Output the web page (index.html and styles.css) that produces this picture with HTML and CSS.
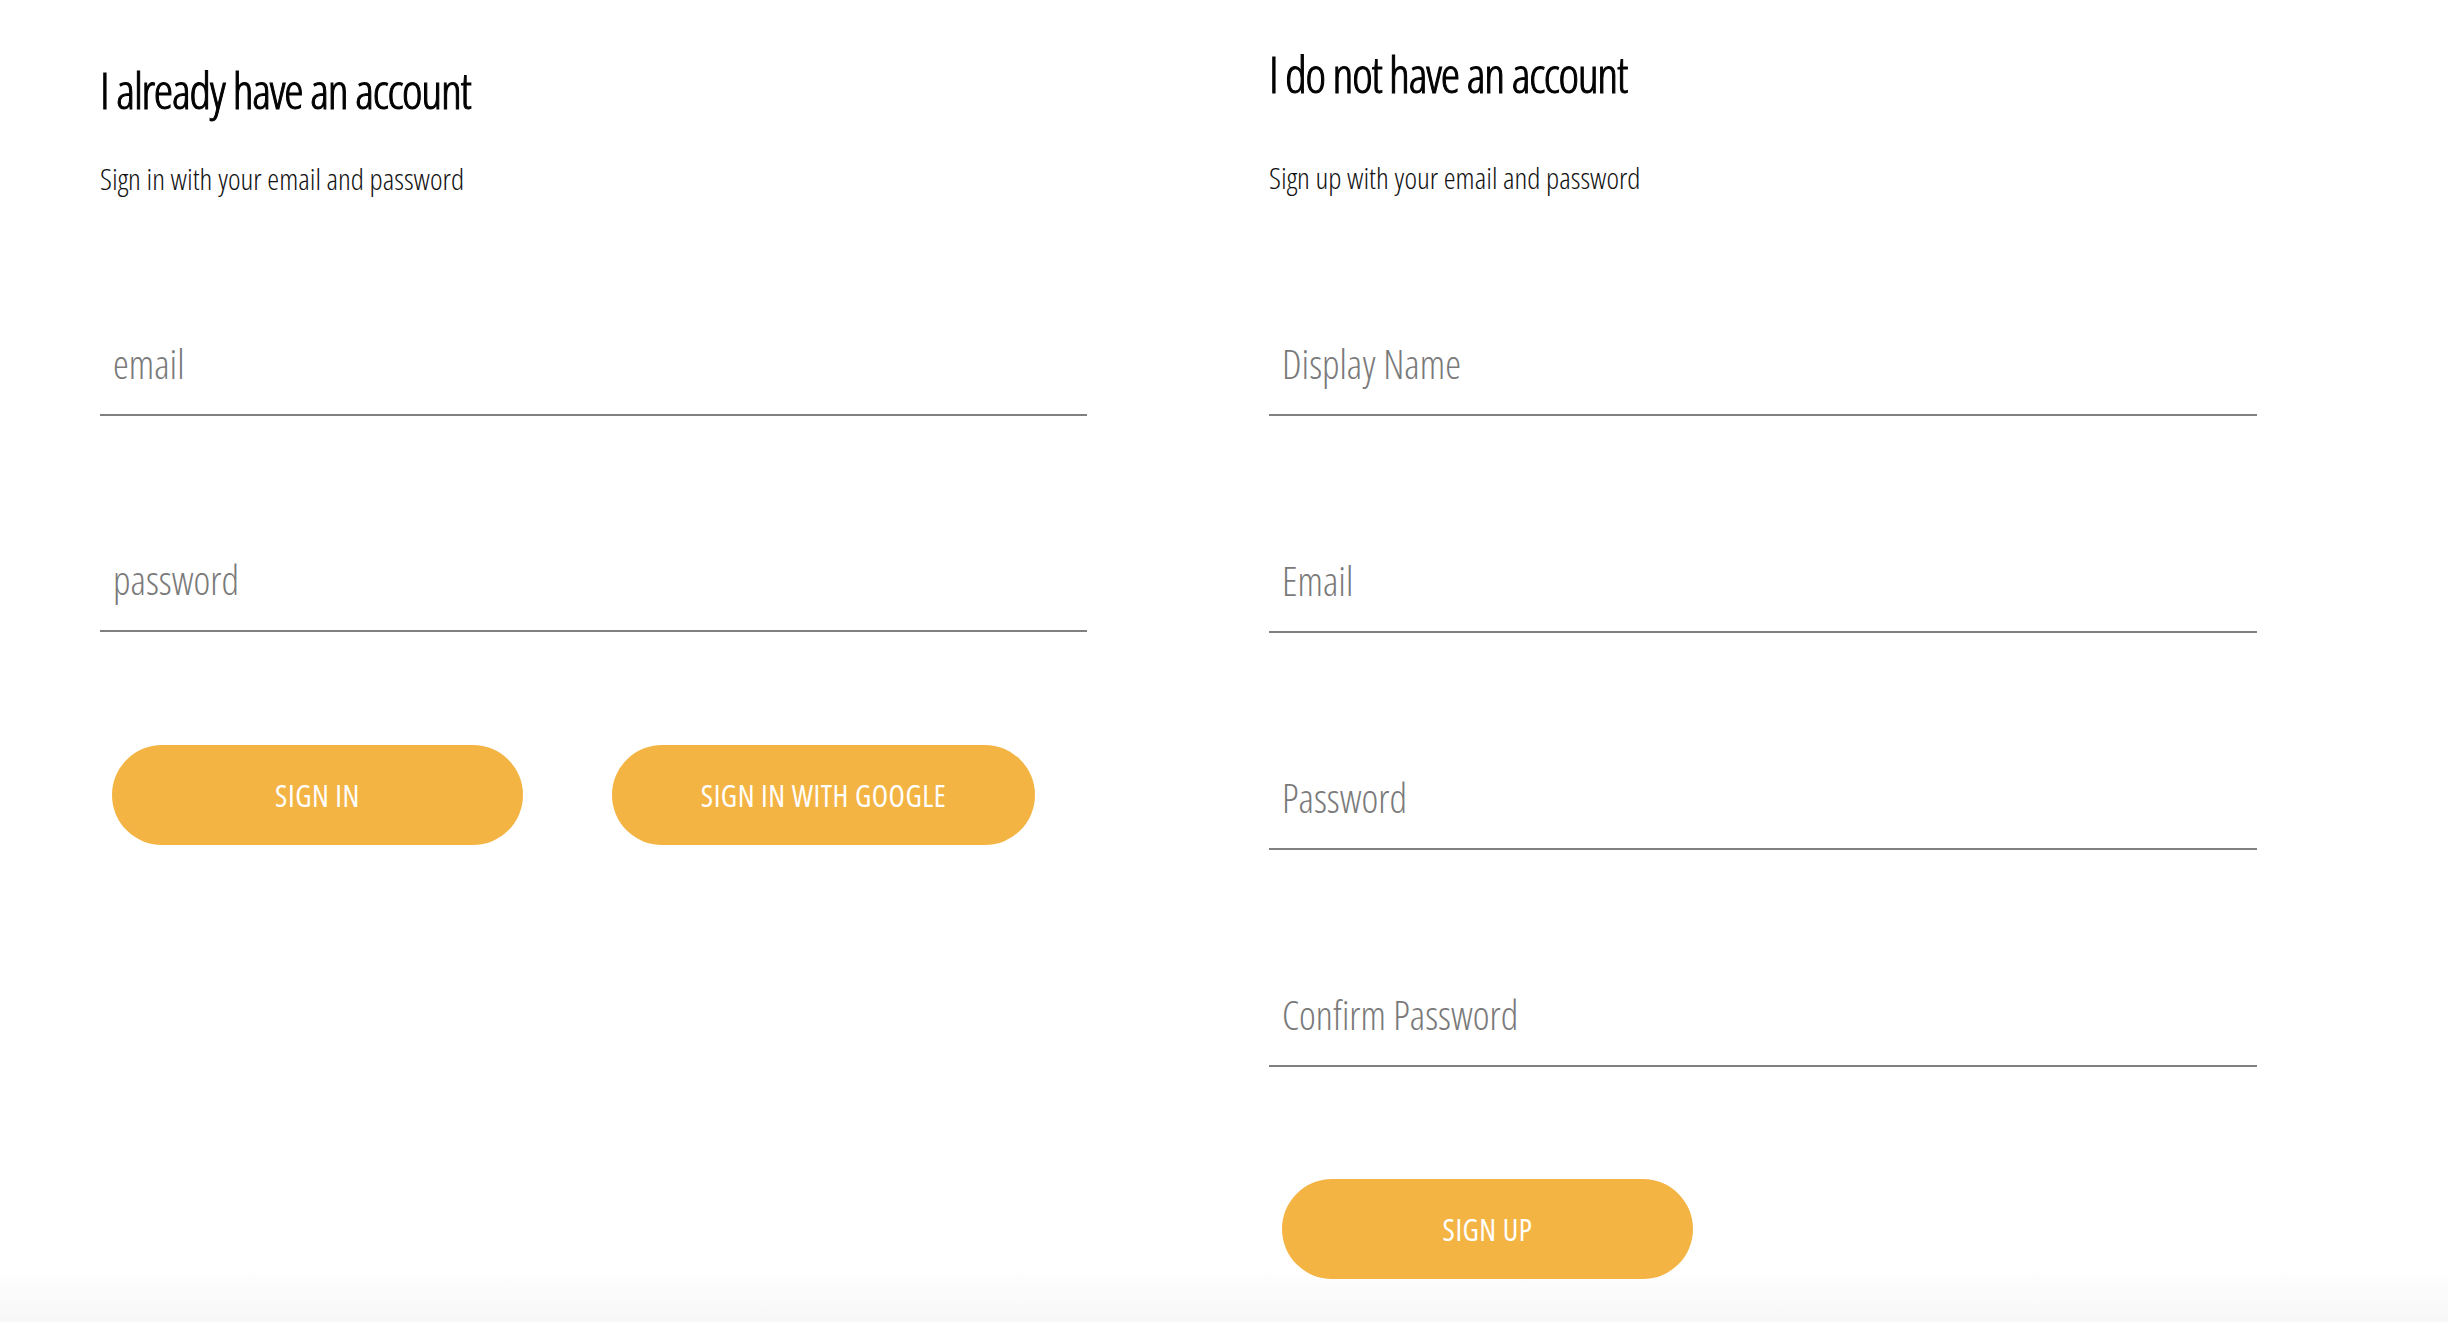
FILE: index.html
```html
<!DOCTYPE html>
<html lang="en">
<head>
<meta charset="utf-8">
<title>Sign in and sign up</title>
<link rel="stylesheet" href="styles.css">
</head>
<body>
<main class="auth">
  <section class="panel panel--signin">
    <h2 class="panel-title">I already have an account</h2>
    <span class="panel-sub">Sign in with your email and password</span>
    <form class="form">
      <div class="field"><input class="field-input" type="email"><label class="field-label">email</label></div>
      <div class="field"><input class="field-input" type="password"><label class="field-label">password</label></div>
      <div class="buttons">
        <button type="button" class="btn btn--signin">Sign in</button>
        <button type="button" class="btn btn--google">Sign in with Google</button>
      </div>
    </form>
  </section>
  <section class="panel panel--signup">
    <h2 class="panel-title">I do not have an account</h2>
    <span class="panel-sub">Sign up with your email and password</span>
    <form class="form">
      <div class="field"><input class="field-input" type="text"><label class="field-label">Display Name</label></div>
      <div class="field"><input class="field-input" type="email"><label class="field-label">Email</label></div>
      <div class="field"><input class="field-input" type="password"><label class="field-label">Password</label></div>
      <div class="field"><input class="field-input" type="password"><label class="field-label">Confirm Password</label></div>
      <div class="buttons">
        <button type="button" class="btn btn--signup">Sign up</button>
      </div>
    </form>
  </section>
</main>
</body>
</html>
```
FILE: styles.css
```css
html {
  min-height: 100%;
  background: linear-gradient(to bottom, #ffffff calc(100% - 56px), #f7f7f7 100%);
}
body {
  margin: 0;
  font-family: "Open Sans", "Liberation Sans", sans-serif;
  font-stretch: 75%;
  color: #000;
}
.auth {
  display: grid;
  grid-template-columns: 987px 988px;
  column-gap: 182px;
  padding-left: 100px;
}
.panel {
  display: flex;
  flex-direction: column;
}
.panel-title {
  margin: 0;
  font-size: 49px;
  line-height: 60px;
  font-weight: 300;
  letter-spacing: -1.3px;
  -webkit-text-stroke: 1px #000;
}
.panel--signin .panel-title { margin-top: 60px; }
.panel--signup .panel-title { margin-top: 44px; }
.panel-sub {
  display: block;
  font-size: 30px;
  line-height: 36px;
  font-weight: 300;
  color: #111;
}
.panel--signin .panel-sub { margin-top: 41px; }
.panel--signup .panel-sub { margin-top: 56px; }
.form {
  display: flex;
  flex-direction: column;
}
.panel--signin .form { padding-top: 119px; }
.panel--signup .form { padding-top: 120px; }
.field {
  position: relative;
  height: 100px;
  box-sizing: border-box;
  border-bottom: 2px solid #808080;
}
.field + .field { margin-top: 116px; }
.panel--signup .field + .field { margin-top: 117px; }
.field-input {
  width: 100%;
  height: 100%;
  box-sizing: border-box;
  border: 0;
  outline: 0;
  background: transparent;
  font: inherit;
  font-size: 36px;
}
.field-label {
  position: absolute;
  left: 13px;
  bottom: 25px;
  font-size: 40px;
  line-height: 50px;
  font-weight: 300;
  color: #7a7a7a;
  pointer-events: none;
}
.buttons {
  display: flex;
  gap: 89px;
  margin-top: 113px;
  padding-left: 12px;
}
.panel--signup .buttons { padding-left: 13px; margin-top: 112px; }
.btn {
  height: 100px;
  border: 0;
  border-radius: 50px;
  background: #f4b443;
  color: #fff;
  font-family: inherit;
  font-stretch: 75%;
  font-size: 30px;
  font-weight: 400;
  letter-spacing: 0.5px;
  text-transform: uppercase;
  padding: 0;
}
.btn--signin, .btn--signup { width: 411px; }
.btn--google { width: 423px; }
```
